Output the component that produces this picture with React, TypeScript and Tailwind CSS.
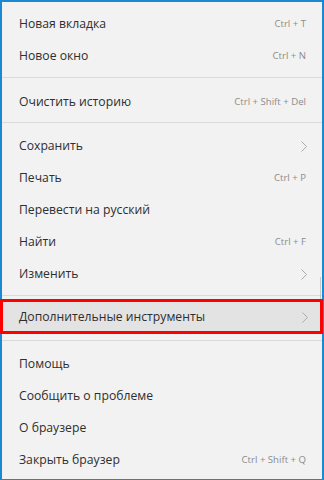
import React from "react";

type Item = { label: string; shortcut?: string; submenu?: boolean };

const groups: Item[][] = [
  [
    { label: "Новая вкладка", shortcut: "Ctrl + T" },
    { label: "Новое окно", shortcut: "Ctrl + N" },
  ],
  [{ label: "Очистить историю", shortcut: "Ctrl + Shift + Del" }],
  [
    { label: "Сохранить", submenu: true },
    { label: "Печать", shortcut: "Ctrl + P" },
    { label: "Перевести на русский" },
    { label: "Найти", shortcut: "Ctrl + F" },
    { label: "Изменить", submenu: true },
  ],
  [{ label: "Дополнительные инструменты", submenu: true }],
  [
    { label: "Помощь" },
    { label: "Сообщить о проблеме" },
    { label: "О браузере" },
    { label: "Закрыть браузер", shortcut: "Ctrl + Shift + Q" },
  ],
];

function Chevron() {
  return (
    <svg width="6" height="11" viewBox="0 0 6 11" className="shrink-0">
      <polyline points="0.5,0.5 5.5,5.5 0.5,10.5" fill="none" stroke="#ababab" strokeWidth="1" />
    </svg>
  );
}

function Row({ item }: { item: Item }) {
  return (
    <div className="flex h-[32px] shrink-0 items-center justify-between pt-[2px] pl-[17px] pr-[16px]">
      <span className="text-[12.2px] text-[#2e2e2e]">{item.label}</span>
      {item.shortcut && <span className="text-[9.6px] text-[#8c8c8c]">{item.shortcut}</span>}
      {item.submenu && (
        <span className="mr-[-1px]">
          <Chevron />
        </span>
      )}
    </div>
  );
}

function Separator({ top, bottom }: { top: string; bottom: string }) {
  return <div className={`h-px shrink-0 bg-[#dadada] ${top} ${bottom}`} />;
}

export default function App() {
  return (
    <div
      className="relative flex h-[480px] w-[324px] flex-col border-x-2 border-t-2 border-b border-[#1b88d3] bg-[#f2f2f2] pt-[5px]"
      style={{ fontFamily: '"Open Sans", "Noto Sans", sans-serif' }}
    >
      {/* scrollbar edge */}
      <div className="absolute right-[1px] top-[275px] h-[24px] w-px bg-[#c9c9c9]" />

      {groups[0].map((it) => (
        <Row key={it.label} item={it} />
      ))}
      <Separator top="mt-[6px]" bottom="mb-[7px]" />
      {groups[1].map((it) => (
        <Row key={it.label} item={it} />
      ))}
      <Separator top="mt-[5px]" bottom="mb-[6px]" />
      {groups[2].map((it) => (
        <Row key={it.label} item={it} />
      ))}
      <Separator top="mt-[6px]" bottom="mb-[3px]" />

      {/* highlighted row */}
      <div className="relative z-10 -ml-[2px] -mr-[1px] flex h-[35px] shrink-0 items-center justify-between border-[3px] border-[#ff0000] bg-[#e3e3e3] pt-px pl-[16px] pr-[12px]">
        <span className="pt-px text-[12.2px] text-[#2e2e2e]">{groups[3][0].label}</span>
        <Chevron />
      </div>

      <Separator top="mt-[6px]" bottom="mb-[6px]" />
      {groups[4].map((it) => (
        <Row key={it.label} item={it} />
      ))}
    </div>
  );
}
